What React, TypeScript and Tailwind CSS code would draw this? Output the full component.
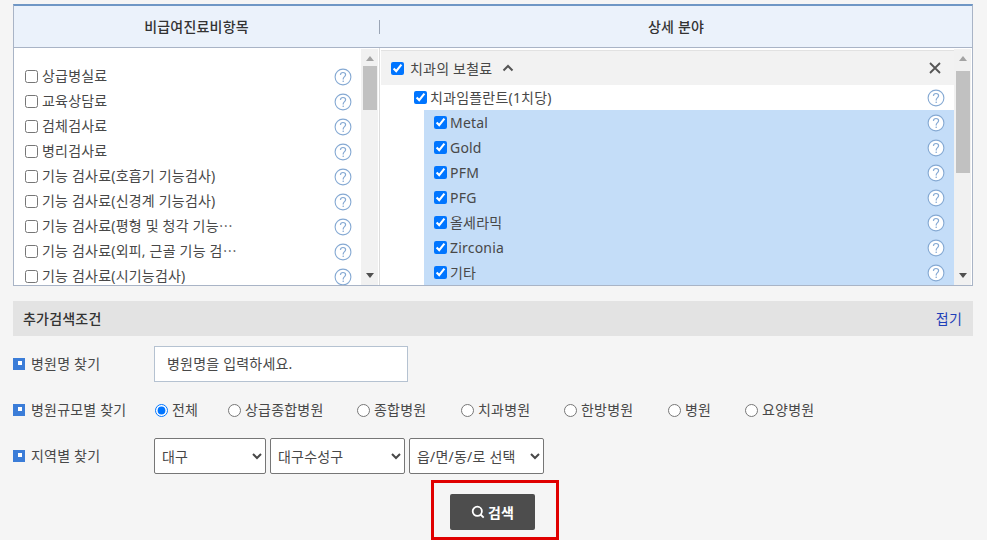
const leftItems = [
  '상급병실료',
  '교육상담료',
  '검체검사료',
  '병리검사료',
  '기능 검사료(호흡기 기능검사)',
  '기능 검사료(신경계 기능검사)',
  '기능 검사료(평형 및 청각 기능⋯',
  '기능 검사료(외피, 근골 기능 검⋯',
  '기능 검사료(시기능검사)',
];

const rightItems = ['Metal', 'Gold', 'PFM', 'PFG', '올세라믹', 'Zirconia', '기타'];

const sizes = [
  { name: '전체', width: 'w-[73px]', checked: true },
  { name: '상급종합병원', width: 'w-[129px]' },
  { name: '종합병원', width: 'w-[104px]' },
  { name: '치과병원', width: 'w-[103px]' },
  { name: '한방병원', width: 'w-[104px]' },
  { name: '병원', width: 'w-[77px]' },
  { name: '요양병원', width: 'w-[90px]' },
];

function HelpIcon() {
  return (
    <svg width="18" height="18" viewBox="0 0 18 18" fill="none" className="shrink-0">
      <circle cx="9" cy="9" r="7.9" fill="#fff" stroke="#85a9d3" strokeWidth="1.1" />
      <path
        d="M6.4 6.9C6.5 5.3 7.6 4.5 9 4.5c1.5 0 2.6.9 2.6 2.2 0 1-.6 1.6-1.3 2.2-.7.6-1.1 1-1.1 2v.6"
        stroke="#85a9d3"
        strokeWidth="1.2"
      />
      <circle cx="9.2" cy="13.3" r=".8" fill="#85a9d3" />
    </svg>
  );
}

function Scrollbar({ thumb }: { thumb: string }) {
  return (
    <div className="mt-px flex w-[17px] shrink-0 flex-col items-center bg-[#f1f1f1]">
      <div className="mt-[7px] h-0 w-0 border-x-[4px] border-b-[5px] border-x-transparent border-b-[#a3a3a3]" />
      <div className={`w-[14px] bg-[#c1c1c1] ${thumb}`} />
      <div className="mt-auto mb-[7px] h-0 w-0 border-x-[4px] border-t-[5px] border-x-transparent border-t-[#505050]" />
    </div>
  );
}

function Bullet() {
  return (
    <span className="flex h-[12px] w-[12px] shrink-0 items-start justify-end bg-[#3b7dd8] pt-[3px] pr-[3px]">
      <span className="h-[4px] w-[4px] bg-white" />
    </span>
  );
}

function FormRow({ label, children, className }: { label: string; children: React.ReactNode; className: string }) {
  return (
    <div className={`flex items-center ${className}`}>
      <div className="flex w-[141px] shrink-0 items-center gap-[6px]">
        <Bullet />
        <span className="pb-[2px]">{label}</span>
      </div>
      {children}
    </div>
  );
}

export default function App() {
  return (
    <div className="h-[540px] overflow-hidden bg-[#f5f5f5] pt-[4px] pr-[14px] pl-[13px] font-['Noto_Sans','Noto_Sans_CJK_KR',sans-serif] text-[14px] tracking-[0.2px] text-[#484848]">
      {/* 항목 선택 패널 */}
      <div className="h-[282px] overflow-hidden border-x border-b border-x-[#a9b4c6] border-b-[#a9b4c6] border-t-2 border-t-[#6f97c5] bg-white">
        <div className="flex h-[42px] items-center border-b border-[#a9b4c6] bg-[#ebf2fb] font-medium text-[#333]">
          <div className="w-[365px] flex-none text-center">비급여진료비항목</div>
          <div className="h-[14px] w-px bg-[#9aa5b5]" />
          <div className="flex-1 text-center">상세 분야</div>
        </div>

        <div className="flex h-[237px]">
          {/* 왼쪽 목록 */}
          <div className="flex w-[365px] shrink-0 pr-px">
            <div className="min-w-0 flex-1 overflow-hidden pt-[16px] pl-[11px]">
              {leftItems.map((item) => (
                <div key={item} className="flex h-[25px] items-center pr-[9px]">
                  <input type="checkbox" readOnly className="mr-[4px] ml-0 shrink-0" />
                  <span className="pb-[2px] whitespace-nowrap">{item}</span>
                  <span className="mt-[1px] ml-auto"><HelpIcon /></span>
                </div>
              ))}
            </div>
            <Scrollbar thumb="mt-[5px] h-[44px]" />
          </div>

          {/* 오른쪽 상세 */}
          <div className="flex min-w-0 flex-1 border-l border-[#dcdcdc] pr-px pl-px">
            <div className="mt-[2px] min-w-0 flex-1 overflow-hidden border-t border-[#e2e2e2]">
              <div className="flex h-[34px] items-center bg-[#f2f2f2] pr-[13px] pl-[10px]">
                <input type="checkbox" checked readOnly className="mr-[6px] ml-0" />
                <span>치과의 보철료</span>
                <svg width="12" height="8" viewBox="0 0 12 8" fill="none" className="ml-[10px]">
                  <path d="M1.5 6.5 6 2l4.5 4.5" stroke="#555" strokeWidth="2" />
                </svg>
                <svg width="12" height="12" viewBox="0 0 12 12" fill="none" className="ml-auto">
                  <path d="M1 1l10 10M11 1 1 11" stroke="#555" strokeWidth="1.8" />
                </svg>
              </div>
              <div className="flex h-[25px] items-center pr-[9px] pl-[33px]">
                <input type="checkbox" checked readOnly className="mr-[3px] ml-0" />
                <span>치과임플란트(1치당)</span>
                <span className="ml-auto"><HelpIcon /></span>
              </div>
              <div className="ml-[43px] bg-[#c4ddf8]">
                {rightItems.map((item) => (
                  <div key={item} className="flex h-[25px] items-center pr-[9px] pl-[10px]">
                    <input type="checkbox" checked readOnly className="mr-[3px] ml-0" />
                    <span>{item}</span>
                    <span className="ml-auto"><HelpIcon /></span>
                  </div>
                ))}
              </div>
            </div>
            <Scrollbar thumb="mt-[10px] h-[102px]" />
          </div>
        </div>
      </div>

      {/* 추가검색조건 */}
      <div className="mt-[15px] flex h-[35px] items-center justify-between bg-[#e3e3e3] pr-[11px] pl-[10px]">
        <span className="font-medium text-[#333]">추가검색조건</span>
        <a className="text-[#1f3fb8]">접기</a>
      </div>

      <FormRow label="병원명 찾기" className="mt-[10px]">
        <input
          readOnly
          placeholder="병원명을 입력하세요."
          className="h-[36px] w-[254px] border border-[#b5c2d1] bg-white px-[12px] pb-[2px] placeholder:text-[#484848]"
        />
      </FormRow>

      <FormRow label="병원규모별 찾기" className="mt-[5px] h-[46px]">
        {sizes.map((size) => (
          <label key={size.name} className={`flex items-center gap-[4px] ${size.width}`}>
            <input type="radio" name="size" defaultChecked={size.checked} className="m-0 ml-[1px]" />
            <span className="pb-[2px]">{size.name}</span>
          </label>
        ))}
      </FormRow>

      <FormRow label="지역별 찾기" className="mt-[5px]">
        <div className="flex gap-[4px]">
          <select className="h-[36px] w-[112px] rounded-[2px] border border-[#767676] bg-white pl-[3px]">
            <option>대구</option>
          </select>
          <select className="h-[36px] w-[135px] rounded-[2px] border border-[#767676] bg-white pl-[3px]">
            <option>대구수성구</option>
          </select>
          <select className="h-[36px] w-[135px] rounded-[2px] border border-[#767676] bg-white pl-[3px]">
            <option>읍/면/동/로 선택</option>
          </select>
        </div>
      </FormRow>

      <div className="mt-[6px] ml-[418px] h-[60px] w-[128px] border-[3px] border-[#e00000] pt-[11px] pl-[16px]">
        <button className="flex h-[36px] w-[85px] items-center justify-center gap-[3px] rounded-[2px] bg-[#4d4d4d] font-bold text-white">
          <svg width="14" height="14" viewBox="0 0 14 14" fill="none">
            <circle cx="6.3" cy="6.3" r="4.6" stroke="#fff" strokeWidth="1.8" />
            <path d="M9.5 9.5 12.7 12.7" stroke="#fff" strokeWidth="1.8" />
          </svg>
          검색
        </button>
      </div>
    </div>
  );
}
